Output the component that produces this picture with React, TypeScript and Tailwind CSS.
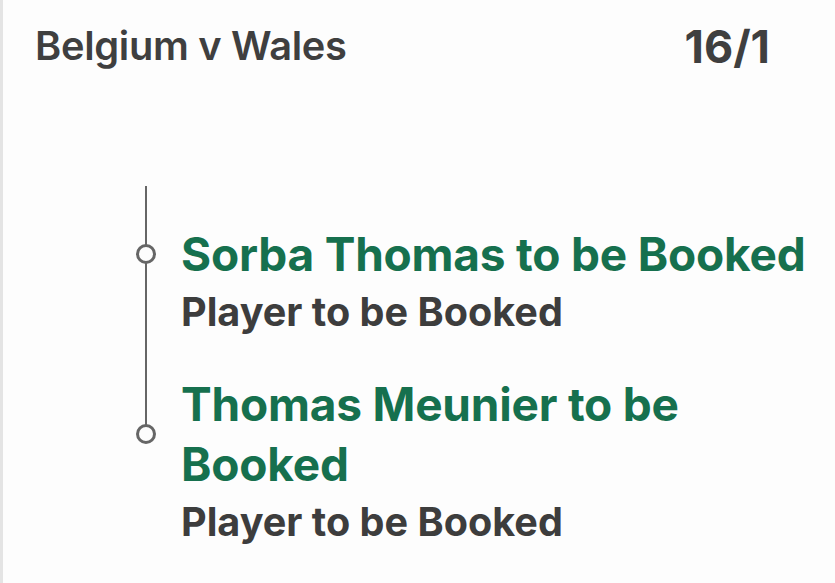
import React from "react";

interface Selection {
  title: string;
  market: string;
}

const SELECTIONS: Selection[] = [
  { title: "Sorba Thomas to be Booked", market: "Player to be Booked" },
  { title: "Thomas Meunier to be Booked", market: "Player to be Booked" },
];

export default function App() {
  return (
    <div
      className="w-[835px] h-[583px] overflow-hidden bg-[#fdfdfd] border-l-[3px] border-[#e4e4e4] pl-[32px] pr-[65px]"
      style={{ fontFamily: "Inter, 'Noto Sans', sans-serif" }}
    >
      {/* Header */}
      <div className="flex items-center justify-between h-[92px]">
        <h2 className="text-[39.8px] leading-none font-semibold text-[#3f3f3f] tracking-[-0.3px]">Belgium v Wales</h2>
        <span className="text-[45px] leading-none font-bold text-[#3f3f3f]">16/1</span>
      </div>

      {/* Timeline */}
      <div className="relative mt-[94px] ml-[101px] pt-[38px] w-[680px]">
        <div className="absolute left-[8.75px] top-0 h-[249px] w-[2.5px] bg-[#666666]" />
        <div className="flex flex-col gap-[34px]">
          {SELECTIONS.map((s) => (
            <div key={s.title} className="grid grid-cols-[20px_1fr] gap-x-[25px]">
              <div className="self-center relative z-10 w-[20px] h-[20px] rounded-full border-[3px] border-[#666666] bg-[#fdfdfd]" />
              <div className="text-[46px] leading-[60px] font-bold text-[#16704e] tracking-[-0.2px] max-w-[630px]">
                {s.title}
              </div>
              <div />
              <div className="text-[39.6px] leading-[56px] font-bold text-[#3d3d3d]">{s.market}</div>
            </div>
          ))}
        </div>
      </div>
    </div>
  );
}
